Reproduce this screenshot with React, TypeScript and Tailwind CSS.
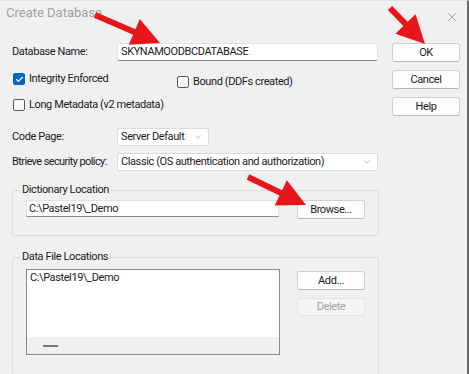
import { X, ChevronDown, Check } from "lucide-react";

const font = { fontFamily: 'Roboto, "Liberation Sans", sans-serif' };

function arrow(tx: number, ty: number, hx: number, hy: number) {
  const dx = hx - tx;
  const dy = hy - ty;
  const len = Math.hypot(dx, dy);
  const ux = dx / len;
  const uy = dy / len;
  const px = -uy;
  const py = ux;
  const headLen = 28;
  const headW = 14;
  const shaft = 3;
  const bx = hx - ux * headLen;
  const by = hy - uy * headLen;
  const pts = [
    [tx + px * shaft, ty + py * shaft],
    [bx + px * shaft, by + py * shaft],
    [bx + px * headW, by + py * headW],
    [hx, hy],
    [bx - px * headW, by - py * headW],
    [bx - px * shaft, by - py * shaft],
    [tx - px * shaft, ty - py * shaft],
  ];
  return pts.map((p) => p.join(",")).join(" ");
}

function Btn({ label, disabled }: { label: string; disabled?: boolean }) {
  return (
    <div
      className={
        disabled
          ? "h-[18px] w-[68px] rounded-[3px] border border-[#e3e3e3] bg-[#f5f5f5] text-[#a3a3a3] flex items-center justify-center"
          : "h-[19px] w-[68px] rounded-[3px] border border-[#d0d0d0] border-b-[#b8b8b8] bg-[#fdfdfd] text-[#1b1b1b] flex items-center justify-center"
      }
    >
      {label}
    </div>
  );
}

function Box({ checked, label }: { checked?: boolean; label: string }) {
  return (
    <div className="flex items-center gap-[4px] h-[12px]">
      {checked ? (
        <div className="w-[12px] h-[12px] rounded-[2px] bg-[#0067c0] flex items-center justify-center">
          <Check className="w-[9px] h-[9px] text-white" strokeWidth={3} />
        </div>
      ) : (
        <div className="w-[12px] h-[12px] rounded-[2px] border border-[#5c5c5c] bg-[#f7f7f7]" />
      )}
      <span>{label}</span>
    </div>
  );
}

export default function App() {
  return (
    <div
      className="relative w-[469px] h-[374px] overflow-hidden bg-[#f0f0f0] text-[11px] leading-[14px] tracking-[-0.4px] whitespace-nowrap text-[#1b1b1b] border-r-2 border-[#6a6a6a] border-t border-t-[#e4e4e4]"
      style={font}
    >
      <div className="h-[33px] flex items-start justify-between pl-[6px] pr-[8px] pt-[4px]">
        <span className="text-[13px] leading-[16px] text-[#a2a2a2] tracking-normal">Create Database</span>
        <X className="w-[14px] h-[14px] text-[#8a8a8a] mt-[5px]" strokeWidth={1.2} />
      </div>

      <div className="flex pl-[12px] pt-[9px]">
        <div className="w-[366px] flex flex-col">
          <div className="flex items-center h-[18px]">
            <span className="w-[105px]">Database Name:</span>
            <div className="flex-1 h-[18px] bg-white border border-[#e2e2e2] border-b-[#8a8a8a] rounded-[2px] px-[3px] flex items-center">
              SKYNAMOODBCDATABASE
            </div>
          </div>

          <div className="flex mt-[12px] pl-[1px]">
            <div className="w-[164px]">
              <Box checked label="Integrity Enforced" />
            </div>
            <div className="mt-[3px]">
              <Box label="Bound (DDFs created)" />
            </div>
          </div>
          <div className="mt-[11px] pl-[1px]">
            <Box label="Long Metadata (v2 metadata)" />
          </div>

          <div className="flex items-center h-[18px] mt-[17px]">
            <span className="w-[105px]">Code Page:</span>
            <div className="w-[92px] h-[18px] bg-white border border-[#dcdcdc] rounded-[2px] pl-[3px] pr-[5px] flex items-center justify-between">
              <span>Server Default</span>
              <ChevronDown className="w-[10px] h-[10px] text-[#8a8a8a]" strokeWidth={1.5} />
            </div>
          </div>

          <div className="flex items-center h-[18px] mt-[7px]">
            <span className="w-[105px] tracking-[-0.6px]">Btrieve security policy:</span>
            <div className="flex-1 h-[18px] bg-white border border-[#dcdcdc] rounded-[2px] pl-[3px] pr-[5px] flex items-center justify-between">
              <span>Classic (OS authentication and authorization)</span>
              <ChevronDown className="w-[10px] h-[10px] text-[#8a8a8a]" strokeWidth={1.5} />
            </div>
          </div>

          <fieldset className="mt-[13px] border border-[#dcdcdc] rounded-[2px] h-[52px] px-[13px]">
            <legend className="px-[2px] ml-[-6px] leading-[12px]">Dictionary Location</legend>
            <div className="flex items-start mt-[4px]">
              <div className="w-[253px] h-[17px] bg-white border border-[#e2e2e2] border-b-[#8a8a8a] px-[2px] flex items-center">
                C:\Pastel19\_Demo
              </div>
              <div className="ml-[18px]">
                <Btn label="Browse..." />
              </div>
            </div>
          </fieldset>

          <fieldset className="mt-[15px] border border-[#dcdcdc] rounded-[2px] h-[124px] px-[13px]">
            <legend className="px-[2px] ml-[-6px] leading-[12px]">Data File Locations</legend>
            <div className="flex items-start mt-[6px]">
              <div className="w-[254px] h-[86px] shrink-0 bg-white border border-[#8a8a8a] flex flex-col">
                <div className="flex-1 px-[3px] pt-[1px]">C:\Pastel19\_Demo</div>
                <div className="h-[17px] bg-[#f0f0f0] flex items-center pl-[16px]">
                  <div className="w-[15px] h-[2px] bg-[#7a7a7a]" />
                </div>
              </div>
              <div className="ml-[17px] mt-[2px] flex flex-col gap-[8px]">
                <Btn label="Add..." />
                <Btn label="Delete" disabled />
              </div>
            </div>
          </fieldset>
        </div>

        <div className="ml-[14px] flex flex-col gap-[8px]">
          <Btn label="OK" />
          <Btn label="Cancel" />
          <Btn label="Help" />
        </div>
      </div>

      <svg className="absolute left-0 top-0 pointer-events-none" width={469} height={374}>
        <polygon points={arrow(95, 14, 160, 42)} fill="#e8161b" />
        <polygon points={arrow(390, 7, 425, 43)} fill="#e8161b" />
        <polygon points={arrow(248, 176, 306, 204)} fill="#e8161b" />
      </svg>
    </div>
  );
}
